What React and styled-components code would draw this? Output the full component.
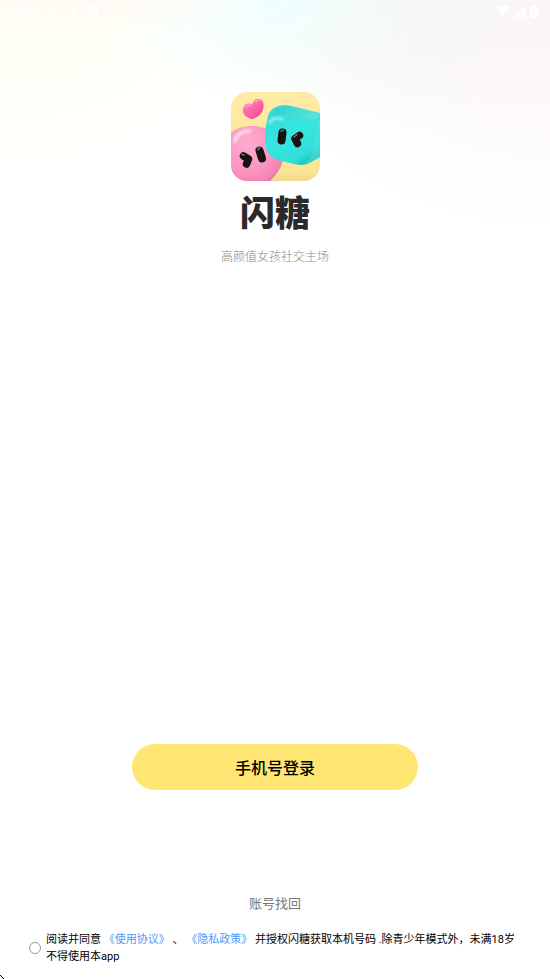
import React, {useState} from "react"
import styled, { createGlobalStyle } from 'styled-components'

const GlobalStyle = createGlobalStyle`
* {
box-sizing: border-box;
}
body {
margin: 0;
background: #FFFFFF;
font-family: Roboto, "Noto Sans CJK SC", sans-serif;
}
`

const Page = styled.div`
position: relative;
display: flex;
flex-direction: column;
min-height: 100vh;
overflow: hidden;
background:
radial-gradient(ellipse 180px 40px at 16% 0, #FFFAF3 0%, rgba(255, 250, 243, 0) 100%),
radial-gradient(ellipse 170px 100px at 49% 0, #EFFFFE 0%, rgba(239, 255, 254, 0) 100%),
radial-gradient(ellipse 220px 130px at 74% 0, #F6F6F5 0%, rgba(246, 246, 245, 0) 100%),
radial-gradient(ellipse 300px 220px at 100% 10px, #FCF5F4 0%, rgba(252, 245, 244, 0) 100%),
radial-gradient(ellipse 300px 180px at 0 10px, #FFFFF4 0%, rgba(255, 255, 244, 0) 100%),
#FFFFFF;
`

const StatusBar = styled.header`
display: flex;
justify-content: space-between;
align-items: center;
height: 22px;
padding: 0 12px;
color: #FFFFFF;
`

const StatusGroup = styled.div`
display: flex;
align-items: center;
gap: ${props => props.$gap};
`

const Time = styled.span`
font-size: 12px;
font-weight: 500;
line-height: 22px;
`

const Brand = styled.section`
display: flex;
flex-direction: column;
align-items: center;
margin-top: 70px;
`

const Logo = styled.svg`
width: 89px;
height: 89px;
`

const Title = styled.h1`
margin: 5px 0 0;
font-family: "Noto Sans CJK SC", sans-serif;
font-size: 35px;
font-weight: 900;
line-height: 50px;
color: #2A2A2A;
`

const Slogan = styled.p`
margin: 12px 0 0;
font-size: 12px;
font-weight: 300;
line-height: 18px;
color: #888888;
`

const Bottom = styled.section`
display: flex;
flex-direction: column;
align-items: center;
margin-top: auto;
padding: 0 28px 14px;
`

const LoginButton = styled.button`
width: 58%;
height: 46px;
padding: 0;
border: none;
border-radius: 23px;
background: #FFE672;
font-family: inherit;
font-size: 16px;
font-weight: 500;
color: #000000;
cursor: pointer;
`

const RecoverLink = styled.a`
margin-top: 104px;
font-size: 13px;
line-height: 20px;
color: #777777;
text-decoration: none;
`

const Agreement = styled.div`
display: flex;
align-items: center;
gap: 5px;
width: 100%;
margin-top: 17px;
`

const Radio = styled.input`
flex: none;
appearance: none;
width: 12px;
height: 12px;
margin: 0 0 0 1px;
border: 1px solid #999999;
border-radius: 50%;
background: ${props => props.checked ? '#FFE672' : 'transparent'};
`

const AgreementText = styled.label`
font-size: 11px;
line-height: 17px;
color: #000000;
`

const AgreementLink = styled.a`
color: #4A9BFA;
text-decoration: none;
`

const Pointer = styled.svg`
position: absolute;
left: 0;
bottom: 0;
`

const DownloadIcon = () => (
    <svg width="10" height="12" viewBox="0 0 10 12" fill="currentColor">
        <path d="M4 0h2v5h3L5 9 1 5h3zM1 10.500h8V12H1z"/>
    </svg>
)

const InputIcon = () => (
    <svg width="9" height="10" viewBox="0 0 9 10" fill="currentColor">
        <path fillRule="evenodd" d="M1 0h7a1 1 0 0 1 1 1v8a1 1 0 0 1-1 1H1a1 1 0 0 1-1-1V1a1 1 0 0 1 1-1zm3 2L2 8h1l.5-1.500h2L6 8h1L5 2zm.5 1.500.6 2H3.900z"/>
    </svg>
)

const WifiIcon = () => (
    <svg width="14" height="12" viewBox="0 0 14 12" fill="currentColor">
        <path d="M0 3.200C4-.6 10-.6 14 3.200L7 11.500z"/>
    </svg>
)

const SignalIcon = () => (
    <svg width="12" height="12" viewBox="0 0 12 12" fill="currentColor">
        <path d="M12 0v12H0z"/>
    </svg>
)

const BatteryIcon = () => (
    <svg width="8" height="13" viewBox="0 0 8 13" fill="currentColor">
        <path fillRule="evenodd" d="M2.500 0h3v1.200H7a1 1 0 0 1 1 1V12a1 1 0 0 1-1 1H1a1 1 0 0 1-1-1V2.200a1 1 0 0 1 1-1h1.500zM4.600 3.500 2 7.500h1.500V11L6 6.600H4.600z"/>
    </svg>
)

const CandyLogo = () => (
    <Logo viewBox="0 0 89 89" role="img" aria-label="闪糖">
        <defs>
            <clipPath id="tile"><rect width="89" height="89" rx="16"/></clipPath>
            <linearGradient id="sand" x1="0" y1="0" x2="0" y2="1">
                <stop offset="0" stopColor="#FFEBA8"/>
                <stop offset=".9" stopColor="#FBE594"/>
                <stop offset="1" stopColor="#EDD98D"/>
            </linearGradient>
            <radialGradient id="pink" cx=".4" cy=".28" r=".75">
                <stop offset="0" stopColor="#FFABD0"/>
                <stop offset=".55" stopColor="#FC96C0"/>
                <stop offset=".85" stopColor="#F383B2"/>
                <stop offset="1" stopColor="#DC6499"/>
            </radialGradient>
            <linearGradient id="cyan" x1=".1" y1="0" x2=".7" y2="1">
                <stop offset="0" stopColor="#35D9D6"/>
                <stop offset=".5" stopColor="#36E5E1"/>
                <stop offset=".85" stopColor="#34DDD8"/>
                <stop offset="1" stopColor="#21BDB9"/>
            </linearGradient>
            <linearGradient id="lid" x1="0" y1="0" x2="1" y2=".3">
                <stop offset="0" stopColor="#2BD0CF"/>
                <stop offset="1" stopColor="#58E2DB"/>
            </linearGradient>
            <linearGradient id="heart" x1="0" y1="0" x2="1" y2="1">
                <stop offset="0" stopColor="#FF86BC"/>
                <stop offset=".5" stopColor="#FF65A8"/>
                <stop offset="1" stopColor="#E83F89"/>
            </linearGradient>
            <filter id="soft" x="-50%" y="-50%" width="200%" height="200%"><feGaussianBlur stdDeviation="1.200"/></filter>
        </defs>
        <g clipPath="url(#tile)">
            <rect width="89" height="89" fill="url(#sand)"/>
            <path d="M20 27C14 25 11 21 12 16.500C13 12 18 10 21 13C22 8 27 5 30.500 8C35 12 32 22 26 25C24 26 22 27.500 20 27z" fill="url(#heart)"/>
            <path d="M15 15c1-2 3-2 4-1M25 10c1-2 3-2.500 4-1.500" fill="none" stroke="#FFB4D6" strokeWidth="1.500" strokeLinecap="round" opacity=".8"/>
            <path d="M-5 47C2 36 12 34 22 34C38 34 51 46 52 61C53 73 47 81 39 89L18 97L-8 86z" fill="url(#pink)"/>
            <path d="M4 49C5 42 12 39 18 39" fill="none" stroke="#FFE3F0" strokeWidth="4" strokeLinecap="round" filter="url(#soft)" opacity=".8"/>
            <path d="M36 29C37 20 41 15 50 13.500C55 12.500 62 14 68 16L92 22V63L82 69C76 73 70 74 63 72L47 68C40 66 34 59 34 49C34 42 34 35 36 29z" fill="url(#cyan)"/>
            <path d="M42 21C45 15 52 13 59 14L89 21C89 27 84 28 77 27L53 24C48 23 43 24 42 21z" fill="url(#lid)"/>
            <path d="M89 26C85 31 84 44 83 53C82 62 78 68 73 73L92 65z" fill="#54E7DE" opacity=".45"/>
            <path d="M39 31C40 27 44 25 51 27" fill="none" stroke="#BDF9F5" strokeWidth="3" strokeLinecap="round" filter="url(#soft)" opacity=".6"/>
            <g fill="none" stroke="#171313" strokeLinecap="round" strokeLinejoin="round">
                <path d="M51.500 40.500L50.500 48.500" strokeWidth="8"/>
                <path d="M68.500 43.500L64 46.500L66.500 51.500" strokeWidth="7.500"/>
                <path d="M28.500 58.500L31 66.500" strokeWidth="8"/>
                <path d="M12.500 64L17.500 67L15.500 72" strokeWidth="7.500"/>
            </g>
            <g fill="none" stroke="#777171" strokeWidth="1.500" strokeLinecap="round">
                <path d="M50 39.500c.5-1 1.500-1.500 2.500-1"/>
                <path d="M63 45l3-2.500"/>
                <path d="M27 58c0-1.500 1-2 2-2"/>
                <path d="M11 62.500l2 .5"/>
            </g>
        </g>
    </Logo>
)

const App = () => {
    const [agreed, setAgreed] = useState(false)

    return(
        <>
        <GlobalStyle/>
        <Page>
            <StatusBar>
                <StatusGroup $gap="11px">
                    <Time>3:39</Time>
                    <DownloadIcon/>
                    <DownloadIcon/>
                    <InputIcon/>
                </StatusGroup>
                <StatusGroup $gap="4px">
                    <WifiIcon/>
                    <SignalIcon/>
                    <BatteryIcon/>
                </StatusGroup>
            </StatusBar>
            <Brand>
                <CandyLogo/>
                <Title>闪糖</Title>
                <Slogan>高颜值女孩社交主场</Slogan>
            </Brand>
            <Bottom>
                <LoginButton type="button">手机号登录</LoginButton>
                <RecoverLink href="#recover">账号找回</RecoverLink>
                <Agreement>
                    <Radio type="radio" id="agree" checked={agreed} onClick={() => setAgreed(!agreed)} onChange={() => {}}/>
                    <AgreementText htmlFor="agree">
                        阅读并同意 <AgreementLink href="#terms">《使用协议》</AgreementLink> 、 <AgreementLink href="#privacy">《隐私政策》</AgreementLink> 并授权闪糖获取本机号码 .除青少年模式外，未满18岁不得使用本app
                    </AgreementText>
                </Agreement>
            </Bottom>
            <Pointer width="5" height="5" viewBox="0 0 5 5" aria-hidden="true">
                <path d="M0 1h1v1H0zM1 2h1v1H1zM2 3h1v1H2zM3 4h1v1H3z" fill="#000000"/>
            </Pointer>
        </Page>
        </>
    )
}

export default App
